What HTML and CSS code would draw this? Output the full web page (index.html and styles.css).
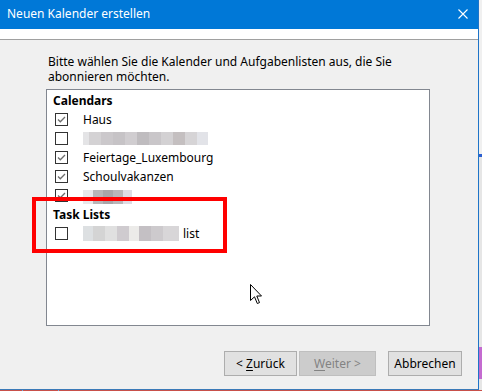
FILE: index.html
```html
<!DOCTYPE html>
<html lang="de">
<head>
<meta charset="utf-8">
<title>Neuen Kalender erstellen</title>
<link rel="stylesheet" href="styles.css">
</head>
<body>
<div class="screen">
  <div class="top">
    <div class="window">
      <div class="titlebar">
        <span class="title">Neuen Kalender erstellen</span>
        <svg class="close" width="10" height="10" viewBox="0 0 10 10"><path d="M0.5 0.5 L9.5 9.5 M9.5 0.5 L0.5 9.5" stroke="#fff" stroke-width="1.1" fill="none"/></svg>
      </div>
      <div class="header"></div>
      <div class="body">
        <p class="intro">Bitte wählen Sie die Kalender und Aufgabenlisten aus, die Sie<br>abonnieren möchten.</p>
        <div class="listbox">
          <div class="group">Calendars</div>
          <div class="row"><span class="cb"><svg viewBox="0 0 11 11" width="11" height="11"><path d="M2 5.5 L4.3 7.8 L9 3" stroke="#6d6d6d" stroke-width="1.3" fill="none"/></svg></span><span class="label">Haus</span></div>
          <div class="row"><span class="cb"></span><span class="blur blur-a"></span></div>
          <div class="row"><span class="cb"><svg viewBox="0 0 11 11" width="11" height="11"><path d="M2 5.5 L4.3 7.8 L9 3" stroke="#6d6d6d" stroke-width="1.3" fill="none"/></svg></span><span class="label">Feiertage_Luxembourg</span></div>
          <div class="row"><span class="cb"><svg viewBox="0 0 11 11" width="11" height="11"><path d="M2 5.5 L4.3 7.8 L9 3" stroke="#6d6d6d" stroke-width="1.3" fill="none"/></svg></span><span class="label">Schoulvakanzen</span></div>
          <div class="row"><span class="cb"><svg viewBox="0 0 11 11" width="11" height="11"><path d="M2 5.5 L4.3 7.8 L9 3" stroke="#6d6d6d" stroke-width="1.3" fill="none"/></svg></span><span class="blur blur-b"></span></div>
          <div class="group">Task Lists</div>
          <div class="row"><span class="cb"></span><span class="blur blur-c"></span><span class="label tight">list</span></div>
          <svg class="cursor" width="13" height="21" viewBox="0 0 13 21"><path d="M0.5 0.5 L0.5 16.5 L4.5 12.8 L7.3 19.5 L9.5 18.6 L6.8 12 L11.5 12 Z" fill="#fff" stroke="#000" stroke-width="1" stroke-linejoin="miter"/></svg>
        </div>
        <div class="buttons">
          <button class="btn">&lt; <u>Z</u>urück</button>
          <button class="btn disabled"><u>W</u>eiter &gt;</button>
          <button class="btn cancel">Abbrechen</button>
        </div>
      </div>
    </div>
    <div class="edge"></div>
  </div>
  <div class="bottom"></div>
  <div class="highlight"></div>
</div>
</body>
</html>
```
FILE: styles.css
```css
* { box-sizing: border-box; }
html, body { margin: 0; padding: 0; }
body {
  width: 482px;
  height: 391px;
  overflow: hidden;
  font-family: "Noto Sans", "Liberation Sans", sans-serif;
  font-size: 12px;
  color: #000;
  background: #f0f0f0;
}
.screen {
  position: relative;
  width: 482px;
  height: 391px;
  display: flex;
  flex-direction: column;
}
.top {
  display: flex;
  height: 390px;
}
.window {
  width: 479px;
  height: 390px;
  border-right: 1px solid #1e74c8;
  border-bottom: 1px solid #3a7ab8;
  background: #f0f0f0;
  display: flex;
  flex-direction: column;
}
.titlebar {
  height: 29px;
  flex: none;
  background: #0078d7;
  color: #fff;
  display: flex;
  align-items: center;
  padding-left: 7px;
  padding-right: 10px;
  padding-bottom: 2px;
}
.title {
  flex: 1;
  line-height: 16px;
}
.close { display: block; margin-top: 1px; }
.header {
  height: 11px;
  flex: none;
  background: #fff;
  border-bottom: 1px solid #a0a0a0;
}
.body {
  flex: 1;
  padding: 0 16px 0 46px;
  display: flex;
  flex-direction: column;
}
.intro {
  margin: 14px 0 0 2px;
  line-height: 15px;
  white-space: nowrap;
}
.listbox {
  position: relative;
  margin-top: 5px;
  width: 384px;
  height: 237px;
  background: #fff;
  border: 1px solid #828790;
  padding-top: 1px;
}
.group {
  height: 19px;
  line-height: 19px;
  font-weight: bold;
  padding-left: 6px;
}
.row {
  height: 19px;
  display: flex;
  align-items: center;
  padding-left: 8px;
}
.cb {
  width: 13px;
  height: 13px;
  border: 1px solid #333;
  background: #fff;
  flex: none;
  margin-right: 15px;
  display: flex;
}
.cb svg { display: block; }
.label { line-height: 19px; white-space: nowrap; }
.label.tight { margin-left: 4px; }
.blur {
  display: block;
  height: 13px;
  flex: none;
}
.blur-a {
  width: 125px;
  background: linear-gradient(90deg,
    #e4e4e6 0 6px, #d4d2d4 6px 18px, #cbc8cb 18px 30px, #c6c3c6 30px 42px,
    #d0cdd0 42px 54px, #bfbcbf 54px 66px, #c9c6c9 66px 78px, #d3d1d3 78px 90px,
    #c4bfc0 90px 102px, #d6d4d6 102px 114px, #e2e3e8 114px 125px);
}
.blur-b {
  width: 49px;
  height: 14px;
  margin-top: 2px;
  background: linear-gradient(90deg,
    #e8e8ea 0 10px, #b8b6b8 10px 20px, #a9a6a9 20px 30px, #b9b6b9 30px 40px, #dedce4 40px 49px);
}
.blur-c {
  width: 96px;
  height: 15px;
  background: linear-gradient(90deg,
    #dde0e2 0 10px, #d4d4d4 10px 22px, #e0e0e0 22px 34px, #cfcbcf 34px 46px,
    #ecebe9 46px 56px, #c4c0c4 56px 68px, #cdcacd 68px 80px, #d8d6d8 80px 96px);
}
.cursor {
  position: absolute;
  left: 203px;
  top: 194px;
}
.buttons {
  display: flex;
  justify-content: flex-end;
  margin-top: 25px;
}
.btn {
  font-family: inherit;
  font-size: 12px;
  height: 25px;
  padding: 0;
  background: #e1e1e1;
  border: 1px solid #adadad;
  color: #000;
  line-height: 21px;
}
.btn:first-child { width: 73px; }
.btn.disabled {
  width: 77px;
  margin-left: 2px;
  background: #cccccc;
  border-color: #bfbfbf;
  color: #838383;
}
.btn.cancel {
  width: 74px;
  margin-left: 12px;
}
.btn u { text-underline-offset: 2px; }
.edge {
  width: 3px;
  height: 390px;
  background: linear-gradient(180deg,
    #f0f0f0 0 154px, #2b5fd0 154px 157px, #e6e6e6 157px 347px, #c46bd0 347px 379px, #e6e6e6 379px);
}
.bottom {
  height: 1px;
  background: linear-gradient(90deg, #c8504a 0 22px, #6fb0e0 22px 23px, #c8504a 23px 58px, #6fb0e0 58px 59px, #c8504a 59px);
}
.highlight {
  position: absolute;
  left: 32px;
  top: 197px;
  width: 195px;
  height: 56px;
  border: 4px solid #ff0000;
}
```
